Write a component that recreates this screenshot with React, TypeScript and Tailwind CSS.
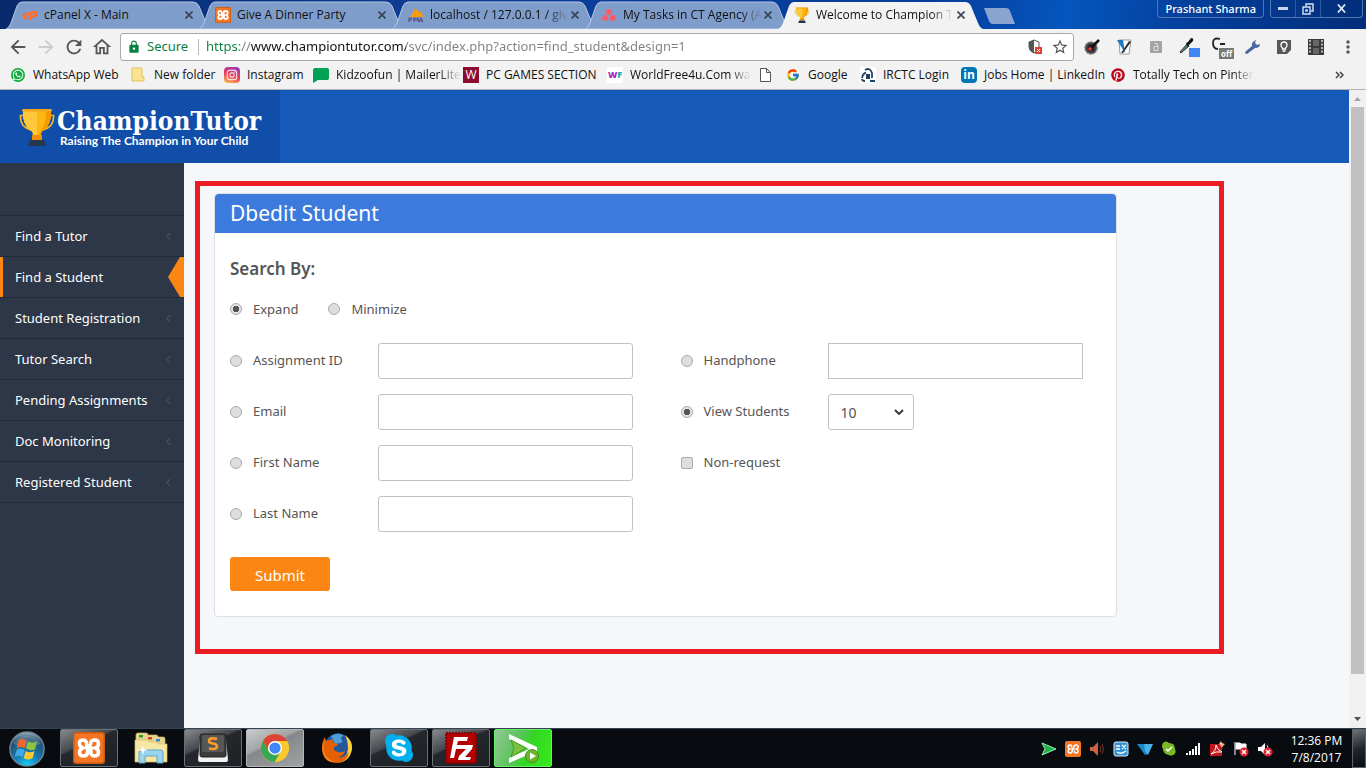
import React, { useState } from "react";
import type { ReactNode } from "react";
import { FaWhatsapp, FaInstagram, FaPinterest, FaSkype } from "react-icons/fa";
import { FcGoogle } from "react-icons/fc";
import {
  MdArrowBack,
  MdArrowForward,
  MdRefresh,
  MdLock,
  MdStarBorder,
  MdMoreVert,
  MdOutlineHome,
} from "react-icons/md";

/* ---------- drawings ---------- */

function Trophy({ className }: { className: string }) {
  return (
    <svg viewBox="0 0 36 38" className={className} aria-hidden="true">
      <path d="M6 7.500H1.500q-1 11 10.500 14.500M30 7.500h4.500q1 11-10.500 14.500" fill="none" stroke="#f5b327" strokeWidth="1.700" />
      <path d="M4 2h28q1 14-7 20c-3 2-3 3-3 6h-8c0-3 0-4-3-6Q3 16 4 2z" fill="#fdb913" />
      <path d="M4 2h14v26h-4c0-3 0-4-3-6Q3 16 4 2z" fill="#ffc83a" />
      <path d="M27 2h5q1 14-7 20c-3 2-3 3-3 6h-2c0-6 7-6 7-26z" fill="#f59a00" />
      <rect x="3" y="1" width="30" height="2.500" rx="1" fill="#f0a51c" />
      <rect x="13" y="27" width="10" height="5" fill="#f08c00" />
      <path d="M11 32h14l2 6H9z" fill="#24384c" />
    </svg>
  );
}

function Xampp({ className }: { className: string }) {
  return (
    <svg viewBox="0 0 32 32" className={className} aria-hidden="true">
      <rect width="32" height="32" rx="3" fill="#c95a12" />
      <rect x="1.500" y="1.500" width="29" height="29" rx="2" fill="#f37423" />
      <path
        d="M13.500 13q.5-5-3.500-5-4 0-3.500 4 .5 3 3.500 4-3 1-3.500 4 0 4 4 4 4 0 4-4 0-4 3-8 0-4 4-4 4 0 4 4 0 3-3.500 4 3.500 1 3.500 4 0 4-4 4t-3.500-5M13 16h6"
        fill="none"
        stroke="#fff"
        strokeWidth="3.600"
        strokeLinejoin="round"
        strokeLinecap="round"
      />
    </svg>
  );
}

function PhpMyAdmin() {
  return (
    <svg viewBox="0 0 16 16" className="h-4 w-4" aria-hidden="true">
      <path d="M1 10c3-2 5-5 6-9l.5 9zM8 10c-.5-3-.5-6 0-8 3 2 4 5 4 8zM12 10V4q3 3 3 6z" fill="#f89c0e" />
      <path d="M1 15v-4h2q1 1 0 2H1M6 15v-4l2 2 2-2v4M11 15l2-4 2 4M12 14h2" fill="none" stroke="#54548c" strokeWidth="1.200" />
    </svg>
  );
}

function Asana() {
  return (
    <svg viewBox="0 0 14 14" className="h-[14px] w-[14px]" fill="#f95c6a" aria-hidden="true">
      <circle cx="7" cy="4" r="3" />
      <circle cx="3.200" cy="10" r="3" />
      <circle cx="10.800" cy="10" r="3" />
    </svg>
  );
}

function StartOrb() {
  return (
    <svg viewBox="0 0 38 38" className="h-9 w-9" aria-hidden="true">
      <defs>
        <radialGradient id="orb" cx=".5" cy="1" r="1">
          <stop offset="0" stopColor="#19d4ff" />
          <stop offset=".4" stopColor="#1479b0" />
          <stop offset=".8" stopColor="#23506f" />
          <stop offset="1" stopColor="#a4b8c4" />
        </radialGradient>
      </defs>
      <circle cx="19" cy="19" r="18" fill="url(#orb)" stroke="#6e8492" strokeWidth="1.500" />
      <path d="M4 13Q19-3 34 13 19 22 4 13z" fill="#fff" opacity=".18" />
      <path d="M10 10q4-3 8.500 0l-2 8.500q-4-3-8.500 0z" fill="#f0652f" />
      <path d="M20 11q4 3 9.500 0l-2 8.500q-4.500 2-9.500-1z" fill="#8cc63f" />
      <path d="M8 20q4-3 8.500 0l-2 7.500q-3.500-3-8.500 0z" fill="#3fa9e8" />
      <path d="M17.500 21q4 3 9.500 0l-2 7.500q-5 3-9.500 0z" fill="#fdc72f" />
    </svg>
  );
}

function Explorer() {
  return (
    <svg viewBox="0 0 34 32" className="h-8 w-[34px]" aria-hidden="true">
      <path d="M2 12V3q0-2 2-2h8q2 0 2 2h8q2 0 2 2h5q2 0 2 2v8z" fill="#e9d68c" stroke="#cdb665" strokeWidth=".7" />
      <rect x="5" y="3" width="4" height="2.500" fill="#2f9c3c" />
      <rect x="14" y="5" width="4" height="2.500" fill="#cf4431" />
      <rect x="22" y="7" width="4" height="2.500" fill="#2f86d8" />
      <path d="M1 8h12l2 2h7l2 2h9v18H1z" fill="#f6e7a2" stroke="#d8be62" strokeWidth=".7" />
      <path d="M5 31V20q0-2 3-2h18q3 0 3 2v11h-6v-7H11v7z" fill="#9ad5ef" stroke="#5ba4cd" />
      <path d="M9 13l1 4 4 1-4 1-1 4-1-4-4-1 4-1z" fill="#fff" />
    </svg>
  );
}

function Sublime() {
  return (
    <svg viewBox="0 0 32 30" className="h-[30px] w-8" aria-hidden="true">
      <path d="M3 6L1 27q0 2 2 2h26q2 0 2-2L29 6z" fill="#f4f4f4" />
      <rect x="3" y="1" width="26" height="23" rx="2" fill="#3b3b3b" stroke="#222" />
      <rect x="5" y="2" width="22" height="17" rx="2" fill="#575757" />
      <path d="M20 6q-8-2-8 2 0 2 4 2.500 4 .5 4 3 0 3.500-8 2" fill="none" stroke="#ff9b2b" strokeWidth="2.600" />
    </svg>
  );
}

function Chrome() {
  return (
    <svg viewBox="0 0 32 32" className="h-[30px] w-[30px]" aria-hidden="true">
      <circle cx="16" cy="16" r="15" fill="#fbc92e" />
      <path d="M3 8.500A15 15 0 0 0 15.500 31L22 20 16 16 9.500 19.500z" fill="#36a852" />
      <path d="M3 8.500A15 15 0 0 1 29 8.500H16a7.500 7.500 0 0 0-6.500 11z" fill="#db4437" />
      <circle cx="16" cy="16" r="7.500" fill="#fff" />
      <circle cx="16" cy="16" r="6" fill="#4285f4" />
    </svg>
  );
}

function Firefox() {
  return (
    <svg viewBox="0 0 32 32" className="h-8 w-8" aria-hidden="true">
      <circle cx="17" cy="15" r="13.500" fill="#24589c" />
      <path d="M10 4q8-5 13 0-3 0-3 3 3 2 0 4l-6 1z" fill="#4c9ed9" />
      <path d="M24 3q8 6 7 14-2 13-15 14 10-4 11-14 0-8-3-14z" fill="#fbd03b" />
      <path d="M4 5q0 3 2 4 3-2 6-1-1 2 1 3l4 1q0 2-4 3-1 4 4 5 4 1 7-1-1 5-7 6 5 2 11-5-2 11-13 11Q1 30 1 16 1 9 4 5z" fill="#e66000" />
      <path d="M4 9q-3 8 0 13 4 7 11 8Q5 31 2 21q-2-6 2-12z" fill="#f68b1f" />
    </svg>
  );
}

function Skype() {
  return (
    <span className="flex h-[32px] w-[32px] items-center justify-center bg-[radial-gradient(circle,white_50%,transparent_51%)]">
      <FaSkype className="h-[32px] w-[32px] text-[#00aff0]" />
    </span>
  );
}

function FileZilla() {
  return (
    <svg viewBox="0 0 32 32" className="h-8 w-8" aria-hidden="true">
      <rect x="1" y="1" width="30" height="30" fill="#b30000" stroke="#8a0000" strokeWidth="2" strokeDasharray="2 1" />
      <path d="M5 26L9 5h14l-1 4H13l-1 4h7l-1 4h-7l-2 9zM17 13h11l-1 4-7 8h6l-1 3H13l1-4 7-7h-5z" fill="#fff" />
    </svg>
  );
}

function GreenPlayer() {
  return (
    <svg viewBox="0 0 32 32" className="h-8 w-8" aria-hidden="true">
      <path d="M2 2l28 13v4L2 31v-5l20-9L2 7z" fill="#fff" />
      <path d="M4 8l15 8-15 9 3-9z" fill="#7ac142" stroke="#4b9b22" />
      <circle cx="25" cy="24" r="6.500" fill="#6fb52c" stroke="#4a8a18" />
      <path d="M23 20.500l6 3.500-6 3.500z" fill="#fff" />
    </svg>
  );
}

/* ---------- browser chrome ---------- */

const tabs: { title: string; icon: ReactNode; active?: boolean }[] = [
  {
    title: "cPanel X - Main",
    icon: (
      <svg viewBox="0 0 18 12" className="h-3 w-[18px]" fill="none" stroke="#ff6c2c" strokeWidth="2.800" aria-hidden="true">
        <path d="M8 5H5Q2.500 5 2 7.500 2 9.500 4 9.500H6.500" />
        <path d="M8.500 11.500L11 2.500h3q2.500 0 2.200 2.500-.5 2.500-3 2.500H11" />
      </svg>
    ),
  },
  { title: "Give A Dinner Party", icon: <Xampp className="h-4 w-4" /> },
  { title: "localhost / 127.0.0.1 / giv", icon: <PhpMyAdmin /> },
  { title: "My Tasks in CT Agency (A", icon: <Asana /> },
  { title: "Welcome to Champion T", icon: <Trophy className="h-4 w-4" />, active: true },
];

const fade = "whitespace-nowrap [mask-image:linear-gradient(to_right,black_calc(100%-22px),transparent)]";

function TabStrip() {
  return (
    <header className="flex h-[29px] items-end bg-[linear-gradient(100deg,#072a6d_0%,#0d3f98_35%,#063c9b_68%,#0556bd_78%,#04419f_86%,#032d78_100%)] pl-[6px]">
      <div role="tablist" className="flex">
        {tabs.map((t, i) => (
          <div
            key={t.title}
            className={`relative flex h-[28px] w-[205px] items-center pr-[14px] pl-[16px] ${i ? "-ml-[12px]" : ""}`}
          >
            <svg viewBox="0 0 205 28" preserveAspectRatio="none" className="absolute inset-0 h-full w-full" aria-hidden="true">
              <path
                d="M0 28Q3 27 5 22L11 5Q13 1 16 1H187Q191 1 193 5L200 22Q202 27 205 28z"
                fill={t.active ? "#f2f2f2" : "#7f9dcb"}
                stroke={t.active ? "none" : "#b4c6e2"}
              />
            </svg>
            <button role="tab" aria-selected={!!t.active} className="relative flex min-w-0 flex-1 items-center gap-[6px] text-left text-[12px] text-[#111]">
              <span className="flex h-4 w-4 shrink-0 items-center justify-center">{t.icon}</span>
              <span className={i > 1 ? fade : "whitespace-nowrap"}>{t.title}</span>
            </button>
            <button aria-label={`Close ${t.title}`} className="relative flex h-4 w-4 shrink-0 items-center justify-center">
              <svg viewBox="0 0 8 8" className="h-2 w-2" aria-hidden="true">
                <path d="M.5.5l7 7m0-7l-7 7" stroke="#3a4152" strokeWidth="1.600" />
              </svg>
            </button>
          </div>
        ))}
      </div>
      <button aria-label="New tab" className="mb-[5px] h-4 w-[34px]">
        <svg viewBox="0 0 34 16" className="h-4 w-[34px]" aria-hidden="true">
          <path d="M1 0h22q3 0 4 3l5 13H10q-3 0-4-3z" fill="#8ba5d2" />
        </svg>
      </button>
      <div className="ml-auto flex items-start gap-[6px] self-start pr-[3px] text-white">
        <button className="h-[18px] rounded-b border border-t-0 border-[#5178b3] px-[7px] font-['Noto_Sans',sans-serif] text-[11px] leading-[17px] font-medium text-white">
          Prashant Sharma
        </button>
        <div className="flex h-[18px] rounded-b border border-t-0 border-[#5178b3]">
          <button aria-label="Minimise" className="flex w-6 items-center justify-center">
            <span className="h-[3px] w-[10px] bg-[#c9d6ec]" />
          </button>
          <button aria-label="Restore" className="flex w-[26px] items-center justify-center border-x border-[#2e5aa0]">
            <svg viewBox="0 0 12 12" className="h-3 w-3" fill="none" stroke="#dbe4f3" strokeWidth="1.400" aria-hidden="true">
              <path d="M4 3V1h7v7H9" />
              <path d="M1 4h7v7H1zM4 7h1v1H4z" />
            </svg>
          </button>
          <button aria-label="Close window" className="flex w-[41px] items-center justify-center">
            <svg viewBox="0 0 10 10" className="h-[9px] w-[9px]" aria-hidden="true">
              <path d="M1 .5l8 9m0-9l-8 9" stroke="#dbe4f3" strokeWidth="2" />
            </svg>
          </button>
        </div>
      </div>
    </header>
  );
}

const extensionClass = "relative flex h-6 w-8 items-center justify-center";

function Extensions() {
  return (
    <div className="flex flex-1 items-center pl-[2px]">
      <button aria-label="Colour wheel" className={extensionClass}>
        <svg viewBox="0 0 16 16" className="h-4 w-4" aria-hidden="true">
          <circle cx="7" cy="9" r="6" fill="#444" stroke="#777" strokeWidth="1.500" strokeDasharray="2 1" />
          <circle cx="7" cy="9" r="3.500" fill="#222" />
          <circle cx="6" cy="10" r="1.800" fill="#e33" />
          <path d="M8 8l7-7" stroke="#111" strokeWidth="2.500" />
        </svg>
      </button>
      <button aria-label="Notes" className={extensionClass}>
        <svg viewBox="0 0 16 16" className="h-4 w-4" aria-hidden="true">
          <path d="M3 1h12l-2 14H4z" fill="#fff" stroke="#999" />
          <path d="M1 1h6l2 13z" fill="#1b78c2" />
          <path d="M5 14L13 2l2 1-8 11z" fill="#333" />
        </svg>
      </button>
      <button aria-label="Lock" className={extensionClass}>
        <svg viewBox="0 0 12 12" className="h-3 w-3" fill="none" aria-hidden="true">
          <rect width="12" height="12" rx="1" fill="#a3a3a3" />
          <path d="M4 5.500h4v4H4zM7.500 5V3q-1.500-1.500-3 0" stroke="#ddd" />
        </svg>
      </button>
      <button aria-label="Colour picker" className={extensionClass}>
        <svg viewBox="0 0 28 20" className="h-5 w-7" aria-hidden="true">
          <path d="M6 15l7-8 2 2-8 7z" fill="#4d8b5a" stroke="#333" />
          <path d="M12 6l2-1 3-4q3 0 2 3l-4 4-1 2z" fill="#111" />
          <rect x="15" y="11" width="11" height="9" fill="#4285f4" />
        </svg>
      </button>
      <button aria-label="Cache switch" className={extensionClass}>
        <svg viewBox="0 0 24 20" className="h-5 w-6" aria-hidden="true">
          <path d="M12 2Q5 0 5 6t5 6M12 7h5" fill="none" stroke="#222" strokeWidth="1.800" />
        </svg>
        <span className="absolute right-[2px] bottom-0 flex h-[11px] w-[15px] items-center justify-center bg-[#777] text-[8px] font-bold text-white">off</span>
      </button>
      <button aria-label="Tools" className={extensionClass}>
        <svg viewBox="0 0 16 16" className="h-4 w-4" aria-hidden="true">
          <path d="M1 13l7-6q-1-4 4-6l-1 3 2 2 3-1q0 4-5 4l-8 6q-2 0-2-2z" fill="#4a66a0" />
        </svg>
      </button>
      <button aria-label="Hints" className={extensionClass}>
        <svg viewBox="0 0 16 16" className="h-4 w-4" aria-hidden="true">
          <path d="M1 1h14v10l-4 4H1z" fill="#585858" />
          <path d="M6.500 10V9Q5 8 5 6q0-3 3-3t3 3q0 2-1.500 3v1zM6.500 12h3" fill="none" stroke="#fff" strokeWidth="1.300" />
        </svg>
      </button>
      <button aria-label="Video" className={extensionClass}>
        <svg viewBox="0 0 16 16" className="h-4 w-4" aria-hidden="true">
          <rect width="16" height="16" fill="#3a3a3a" />
          <path d="M2 1v14M14 1v14" stroke="#ddd" strokeWidth="1.500" strokeDasharray="2 1.500" />
          <rect x="5" y="1" width="6" height="6" fill="#666" />
          <rect x="5" y="9" width="6" height="6" fill="#666" />
        </svg>
      </button>
      <button aria-label="Menu" className={`text-[#555] ${extensionClass}`}>
        <MdMoreVert className="h-5 w-5 shrink-0" />
      </button>
    </div>
  );
}

function Toolbar() {
  const [url, setUrl] = useState("https://www.championtutor.com/svc/index.php?action=find_student&design=1");
  return (
    <div className="flex h-[36px] items-center bg-[#f2f2f2]">
      <nav className="flex w-[120px] items-center gap-[6px] pl-[7px] text-[#555]">
        <button aria-label="Back"><MdArrowBack className="h-[22px] w-[22px]" /></button>
        <button aria-label="Forward" className="text-[#ccc]"><MdArrowForward className="h-[22px] w-[22px]" /></button>
        <button aria-label="Reload"><MdRefresh className="h-[22px] w-[22px]" /></button>
        <button aria-label="Home"><MdOutlineHome className="h-[22px] w-[22px]" /></button>
      </nav>
      <div className="flex h-[28px] w-[954px] items-center rounded-[3px] border border-[#a9a9a9] bg-white pr-[4px] pl-[6px] font-['Noto_Sans',sans-serif] text-[13px]">
        <MdLock className="h-[14px] w-[14px] text-[#0b8043]" />
        <span className="ml-[6px] w-[45px] text-[#0b8043]">Secure</span>
        <span className="mr-[7px] ml-[6px] h-4 w-px bg-[#bbb]" />
        <input
          aria-label="Address"
          value={url}
          onChange={(e) => setUrl(e.target.value)}
          className="min-w-0 flex-1 bg-[linear-gradient(to_right,#0b8043_33px,#808080_33px,#808080_45px,#111_45px,#111_200px,#808080_200px)] bg-clip-text text-transparent outline-none"
        />
        <button aria-label="Script blocked" className="mr-2 h-4 w-4">
          <svg viewBox="0 0 16 16" className="h-4 w-4" aria-hidden="true">
            <path d="M7 1l5 2v5q0 4-5 6-5-2-5-6V3z" fill="#fff" stroke="#555" />
            <path d="M7 1v13q-5-2-5-6V3z" fill="#555" />
            <rect x="8" y="8" width="7" height="7" fill="#db4437" />
            <path d="M10 10l3 3m0-3l-3 3" stroke="#fff" />
          </svg>
        </button>
        <button aria-label="Bookmark this page" className="text-[#555]"><MdStarBorder className="h-[18px] w-[18px]" /></button>
      </div>
      <Extensions />
    </div>
  );
}

const bookmarks: { label: string; width: string; icon: ReactNode; faded?: boolean }[] = [
  {
    label: "WhatsApp Web",
    width: "w-[121px]",
    icon: <span className="flex h-[14px] w-[14px] items-center justify-center rounded-full bg-[#12af3b] text-white"><FaWhatsapp className="h-3 w-3" /></span>,
  },
  {
    label: "New folder",
    width: "w-[93px]",
    icon: (
      <svg viewBox="0 0 16 16" className="h-4 w-4" aria-hidden="true">
        <path d="M1 1h10v9h2v4H1z" fill="#fbe394" stroke="#e2c25a" />
      </svg>
    ),
  },
  {
    label: "Instagram",
    width: "w-[89px]",
    icon: (
      <span className="flex h-4 w-4 items-center justify-center rounded bg-[linear-gradient(20deg,#fdc04b,#e93a5c_50%,#8a3ac8)] text-white">
        <FaInstagram className="h-3 w-3" />
      </span>
    ),
  },
  {
    label: "Kidzoofun | MailerLite",
    width: "w-[150px]",
    faded: true,
    icon: (
      <svg viewBox="0 0 16 16" className="h-4 w-4" aria-hidden="true">
        <path d="M2 1h12q2 0 2 2v8q0 2-2 2H5l-5 3V3q0-2 2-2z" fill="#00a154" />
      </svg>
    ),
  },
  {
    label: "PC GAMES SECTION",
    width: "w-[144px]",
    icon: <span className="flex h-4 w-4 items-center justify-center bg-[#8c0a30] text-[12px] text-white">W</span>,
  },
  {
    label: "WorldFree4u.Com wa",
    width: "w-[151px]",
    faded: true,
    icon: (
      <span className="flex h-4 w-4 items-center justify-center bg-white text-[9px] font-extrabold">
        <span className="text-[#b21fc0]">W</span>
        <span className="text-[#1fb0a8]">F</span>
      </span>
    ),
  },
  {
    label: "",
    width: "w-[27px]",
    icon: (
      <svg viewBox="0 0 16 16" className="h-4 w-4" fill="#fff" stroke="#555" aria-hidden="true">
        <path d="M2.500 1.500h6l4 4v9h-10zM8.500 1.500v4h4" />
      </svg>
    ),
  },
  { label: "Google", width: "w-[75px]", icon: <FcGoogle className="h-[14px] w-[14px]" /> },
  {
    label: "IRCTC Login",
    width: "w-[101px]",
    icon: (
      <svg viewBox="0 0 16 16" className="h-4 w-4" aria-hidden="true">
        <rect width="16" height="16" fill="#fff" />
        <path d="M2 11Q3 6 6 6M2 12q0 2 3 2M5 3q5-3 7 3v5M10 14h5" fill="none" stroke="#1c4469" strokeWidth="1.800" />
        <rect x="6" y="7" width="4" height="5" fill="#1c4469" />
      </svg>
    ),
  },
  {
    label: "Jobs Home | LinkedIn",
    width: "w-[149px]",
    icon: <span className="flex h-4 w-4 items-center justify-center rounded-sm bg-[#0077b5] text-[12px] font-bold text-white">in</span>,
  },
  { label: "Totally Tech on Pinter", width: "w-[150px]", faded: true, icon: <FaPinterest className="h-[14px] w-[14px] text-[#bd081c]" /> },
];

function BookmarksBar() {
  return (
    <nav aria-label="Bookmarks" className="flex h-[25px] items-center border-b border-[#b4b4b4] bg-[#f2f2f2] pb-[4px] pl-[10px] text-[12px] text-[#111]">
      {bookmarks.map((b, i) => (
        <a key={i} href="#" aria-label={b.label || "Untitled"} className={`flex shrink-0 items-center gap-[7px] ${b.width}`}>
          <span className="flex h-4 w-4 shrink-0 items-center justify-center">{b.icon}</span>
          {b.label && <span className={b.faded ? fade : "whitespace-nowrap"}>{b.label}</span>}
        </a>
      ))}
      <button aria-label="More bookmarks" className="mr-[22px] ml-auto">
        <svg viewBox="0 0 9 8" className="h-2 w-[9px]" fill="none" stroke="#444" strokeWidth="1.500" aria-hidden="true">
          <path d="M1 1l3 3-3 3M5 1l3 3-3 3" />
        </svg>
      </button>
    </nav>
  );
}

/* ---------- web page ---------- */

const menu = [
  "Find a Tutor",
  "Find a Student",
  "Student Registration",
  "Tutor Search",
  "Pending Assignments",
  "Doc Monitoring",
  "Registered Student",
];

function Sidebar() {
  return (
    <nav aria-label="Main" className="w-[184px] shrink-0 bg-[#2d3748] pt-[52px]">
      <ul className="border-t border-[#212a38]">
        {menu.map((m) => {
          const active = m === "Find a Student";
          return (
            <li key={m} className="border-b border-[#212a38]">
              <a
                href="#"
                className={`flex h-10 items-center justify-between text-[13px] text-white ${active ? "border-l-[3px] border-[#fb8614] pl-[12px]" : "pr-[13px] pl-[15px]"}`}
              >
                <span className="pt-[2px]">{m}</span>
                {active ? (
                  <svg viewBox="0 0 16 40" className="h-10 w-4" aria-hidden="true">
                    <path d="M16 0H12L0 20 12 40h4z" fill="#fb8614" />
                  </svg>
                ) : (
                  <svg viewBox="0 0 6 10" className="h-[9px] w-[5px]" fill="none" stroke="#5d6a7e" aria-hidden="true">
                    <path d="M5 1L1 5l4 4" />
                  </svg>
                )}
              </a>
            </li>
          );
        })}
      </ul>
    </nav>
  );
}

const radioClass =
  "h-3 w-3 shrink-0 appearance-none rounded-full border border-[#ababab] bg-[#dedede] checked:bg-[radial-gradient(circle,#555_3px,#e4e4e4_3px)]";
const fieldClass = "h-9 min-w-0 flex-1 border border-[#c2c2c2] bg-white px-3 outline-none";

function Choice({ name, label, checked, type = "radio", className = "w-[148px]" }: {
  name: string;
  label: string;
  checked?: boolean;
  type?: "radio" | "checkbox";
  className?: string;
}) {
  return (
    <label className={`flex shrink-0 items-center gap-[11px] ${className}`}>
      <input
        type={type}
        name={name}
        defaultChecked={checked}
        className={type === "radio" ? radioClass : "h-3 w-3 shrink-0 appearance-none rounded-xs border border-[#ababab] bg-[#dedede] checked:bg-[#555]"}
      />
      {label}
    </label>
  );
}

function SearchForm() {
  return (
    <section className="rounded-sm border border-[#dde1e6] bg-white text-[13px] text-[#555]">
      <h1 className="flex h-[39px] items-center rounded-t-sm bg-[#3c7bdd] px-[15px] text-[21px] text-white">Dbedit Student</h1>
      <form onSubmit={(e) => e.preventDefault()} className="pt-[24px] pb-[25px]">
        <h2 className="px-[15px] text-[17px] leading-6 font-semibold">Search By:</h2>
        <div className="mt-[18px] flex gap-[30px] px-[15px] leading-5">
          <Choice name="mode" label="Expand" checked className="" />
          <Choice name="mode" label="Minimize" className="" />
        </div>
        <div className="mt-6 grid grid-cols-2">
          <div className="flex flex-col gap-[15px] pr-[33px] pl-[15px]">
            {["Assignment ID", "Email", "First Name", "Last Name"].map((l) => (
              <div key={l} className="flex items-center">
                <Choice name="field" label={l} />
                <input type="text" aria-label={l} className={`rounded-[3px] ${fieldClass}`} />
              </div>
            ))}
          </div>
          <div className="flex flex-col gap-[15px] pr-[33px] pl-[15px]">
            <div className="flex items-center">
              <Choice name="field" label="Handphone" className="w-[147px]" />
              <input type="text" aria-label="Handphone" className={fieldClass} />
            </div>
            <div className="flex items-center">
              <Choice name="view" label="View Students" checked className="w-[147px]" />
              <div className="relative">
                <select aria-label="Students per page" className="h-9 w-[86px] appearance-none rounded-[3px] border border-[#c2c2c2] bg-white px-3 text-[14px]">
                  <option>10</option>
                  <option>25</option>
                  <option>50</option>
                </select>
                <svg viewBox="0 0 10 7" className="pointer-events-none absolute top-[15px] right-[10px] h-[7px] w-[10px]" fill="none" stroke="#333" strokeWidth="1.800" aria-hidden="true">
                  <path d="M1 1l4 4 4-4" />
                </svg>
              </div>
            </div>
            <div className="flex h-9 items-center">
              <Choice name="nonrequest" label="Non-request" type="checkbox" />
            </div>
          </div>
        </div>
        <button type="submit" className="mt-[25px] ml-[15px] block h-[34px] w-[100px] rounded-[3px] bg-[#fb8614] pt-[2px] text-[15px] text-white">
          Submit
        </button>
      </form>
    </section>
  );
}

function WebPage() {
  return (
    <div className="flex min-w-0 flex-1 flex-col bg-[#f5f7fa] font-['Noto_Sans','Open_Sans',sans-serif]">
      <header className="flex h-[73px] bg-[#1559b9]">
        <a href="#" className="flex w-[280px] items-center gap-[2px] bg-[#104ea9] pl-[19px] text-white">
          <Trophy className="h-[38px] w-[36px]" />
          <span className="flex flex-col">
            <span className="font-['DejaVu_Serif_Condensed','DejaVu_Serif',serif] text-[26px] leading-7 font-bold whitespace-nowrap">ChampionTutor</span>
            <span className="pl-[3px] font-[Lato,sans-serif] text-[12px] leading-[12px] font-bold whitespace-nowrap">Raising The Champion in Your Child</span>
          </span>
        </a>
      </header>
      <div className="flex flex-1">
        <Sidebar />
        <main className="min-w-0 flex-1 pt-[18px] pr-[125px] pl-[11px]">
          <div className="border-[5px] border-[#ed1c24] pt-[7px] pr-[102px] pb-[32px] pl-[14px]">
            <SearchForm />
          </div>
        </main>
      </div>
    </div>
  );
}

function Scrollbar() {
  return (
    <div aria-hidden="true" className="flex w-[17px] shrink-0 flex-col items-center bg-[#f1f1f1]">
      <svg viewBox="0 0 17 17" className="h-[17px] w-[17px]"><path d="M5 11h7L8.500 7z" fill="#a3a3a3" /></svg>
      <div className="w-[13px] grow-[567] bg-[#c1c1c1]" />
      <div className="grow-[37]" />
      <svg viewBox="0 0 17 17" className="h-[17px] w-[17px]"><path d="M5 6h7l-3.500 4z" fill="#505050" /></svg>
    </div>
  );
}

/* ---------- taskbar ---------- */

const apps: { name: string; icon: ReactNode; look: string }[] = [
  { name: "XAMPP", icon: <Xampp className="h-8 w-8" />, look: "open" },
  { name: "Explorer", icon: <Explorer />, look: "idle" },
  { name: "Sublime Text", icon: <Sublime />, look: "open" },
  { name: "Chrome", icon: <Chrome />, look: "focus" },
  { name: "Firefox", icon: <Firefox />, look: "idle" },
  { name: "Skype", icon: <Skype />, look: "open" },
  { name: "FileZilla", icon: <FileZilla />, look: "open" },
  { name: "Player", icon: <GreenPlayer />, look: "green" },
];

const looks: Record<string, string> = {
  idle: "border-transparent",
  open: "border-[#6b7074] bg-[linear-gradient(155deg,#868a8d_0%,#45494d_38%,#24282d_42%,#1d2126_100%)]",
  focus: "border-[#b5b8ba] bg-[linear-gradient(155deg,#c9cbcc_0%,#a2a4a6_38%,#85888a_42%,#a0a2a3_100%)]",
  green: "border-[#69f06b] bg-[linear-gradient(110deg,#94c895_0%,#58c358_40%,#32d722_60%,#39ea1c_100%)]",
};

const trayShapes: ReactNode[] = [
  <path d="M1 2l14 6-14 6 3-6z" fill="#20b24a" stroke="#9de8ad" />,
  <>
    <rect width="16" height="16" rx="2" fill="#f37423" />
    <path d="M6.500 6.500Q7 4 5 4 3 4 3.200 6 3.500 7.500 4.700 8 3.200 8.500 3.200 10q0 2 1.800 2 2.200 0 2.200-2T9 6q0-2 2-2t2 2q0 1.500-1.500 2 1.500.5 1.500 2 0 2-2 2T9.500 9.500M6.500 8h3" fill="none" stroke="#fff" strokeWidth="1.600" />
  </>,
  <>
    <path d="M1 6h3l5-5v14l-5-5H1z" fill="#cf6043" />
    <path d="M11 5q2 3 0 6M13 3q3 5 0 10" stroke="#7c3323" fill="none" />
  </>,
  <>
    <rect x="1" y="1" width="14" height="14" rx="2" fill="#3691d2" stroke="#d9edfa" />
    <path d="M3 5h4M3 8h4M9 4l4 4M13 4L9 8M4 11q4 3 9-1" stroke="#fff" fill="none" strokeWidth="1.400" />
  </>,
  <>
    <path d="M0 3h7l4 10-3 1z" fill="#1986c9" />
    <path d="M7 3h9l-5 11-3-4z" fill="#49b1e9" />
  </>,
  <>
    <path d="M2 2q3-3 6 0 6 0 6 6 2 4-2 6-2 1-4 0-6-1-6-6-2-3 0-6z" fill="#7ab828" />
    <path d="M5 8l2 2 4-4" stroke="#fff" fill="none" strokeWidth="1.500" />
  </>,
  <path d="M1 12h2v2H1zM4 10h2v4H4zM7 8h2v6H7zM10 5h2v9h-2zM13 2h2v12h-2z" fill="#fff" />,
  <>
    <rect x="1" y="3" width="12" height="12" fill="#c4151c" />
    <path d="M2 13q5-3 5-9 1 5 6 7-6-1-11 2z" fill="none" stroke="#fff" />
    <path d="M12 0l1 2 3 1-2 2-1 2-1-2-2-2z" fill="#f7b68d" />
  </>,
  <>
    <path d="M2 1v13M3 2h4l1 1h5v6H8L7 8H3z" fill="#fff" stroke="#fff" />
    <circle cx="11" cy="11" r="4.500" fill="#d9232e" />
    <path d="M9 9l4 4m0-4l-4 4" stroke="#fff" strokeWidth="1.400" />
  </>,
  <>
    <path d="M1 6h3l4-4v12l-4-4H1z" fill="#fff" />
    <path d="M10 4q2 3 0 6" stroke="#ccc" fill="none" />
    <circle cx="11" cy="11" r="4.500" fill="#d9232e" />
    <path d="M9 9l4 4m0-4l-4 4" stroke="#fff" strokeWidth="1.400" />
  </>,
];

function Taskbar() {
  return (
    <footer className="flex h-10 items-stretch border-t border-[#35424f] bg-[#080c11] text-white">
      <button aria-label="Start" className="flex w-[60px] items-center pl-[9px]"><StartOrb /></button>
      <div className="flex gap-1">
        {apps.map((a) => (
          <button key={a.name} aria-label={a.name} className={`flex h-[38px] w-[58px] items-center justify-center rounded-xs border ${looks[a.look]}`}>
            {a.icon}
          </button>
        ))}
      </div>
      <div className="ml-auto flex items-center">
        <div className="flex items-center gap-2">
          {trayShapes.map((shape, i) => (
            <svg key={i} viewBox="0 0 16 16" className="h-4 w-4" aria-hidden="true">{shape}</svg>
          ))}
        </div>
        <time className="flex w-[79px] flex-col items-center pl-[8px] text-[12px] leading-[17px] whitespace-nowrap" dateTime="2017-07-08T12:36">
          <span>12:36 PM</span>
          <span>7/8/2017</span>
        </time>
        <button aria-label="Show desktop" className="h-full w-[14px] border border-[#5a6168] bg-[linear-gradient(160deg,#6f7377,#22272c_50%,#080c11)]" />
      </div>
    </footer>
  );
}

export default function App() {
  return (
    <div className="flex min-h-screen flex-col font-['Open_Sans','Noto_Sans',sans-serif]">
      <TabStrip />
      <Toolbar />
      <BookmarksBar />
      <div className="flex flex-1">
        <WebPage />
        <Scrollbar />
      </div>
      <Taskbar />
    </div>
  );
}
